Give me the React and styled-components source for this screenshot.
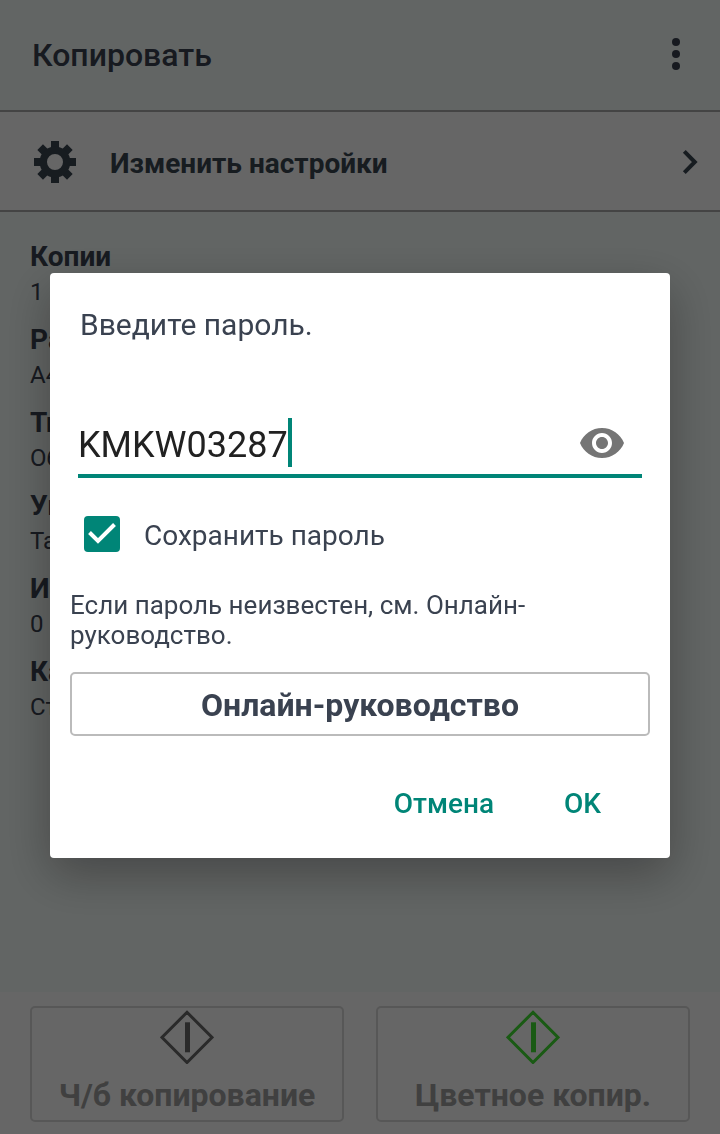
import React, { useState } from 'react';
import styled, { createGlobalStyle } from 'styled-components'
import { MdVisibility } from 'react-icons/md'

const GlobalStyle = createGlobalStyle`
* {
  box-sizing: border-box;
}

body {
  margin: 0;
  font-family: Roboto, "Noto Sans", sans-serif;
  color: #3a4250;
}

button, input {
  font-family: inherit;
  color: inherit;
}
`

const Screen = styled.div`
  min-height: 100vh;
  display: flex;
  flex-direction: column;
  background-color: #f5fcfa;
`

const Header = styled.header`
  display: flex;
  align-items: center;
  justify-content: space-between;
  height: 112px;
  padding: 0 32px;
  border-bottom: 2px solid #aaa;
`

const Title = styled.h1`
  margin: 0;
  font-size: 32px;
  font-weight: 500;
  line-height: 36px;
`

const IconButton = styled.button`
  display: flex;
  padding: 0;
  border: none;
  background: none;
`

const SettingsRow = styled.button`
  display: flex;
  align-items: center;
  gap: 32px;
  height: 100px;
  padding: 2px 20px 0 32px;
  border: none;
  border-bottom: 2px solid #aaa;
  background-color: #fff;
  color: #3a4652;
`

const SettingsLabel = styled.span`
  flex-grow: 1;
  padding-top: 4px;
  text-align: left;
  font-size: 28px;
  font-weight: 700;
  line-height: 36px;
`

const Options = styled.dl`
  flex-grow: 1;
  display: flex;
  flex-direction: column;
  gap: 13px;
  margin: 0;
  padding: 27px 30px;
`

const OptionName = styled.dt`
  font-size: 28px;
  font-weight: 700;
  line-height: 36px;
`

const OptionValue = styled.dd`
  margin: 0;
  font-size: 24px;
  line-height: 34px;
`

const Footer = styled.footer`
  display: flex;
  gap: 32px;
  padding: 14px 30px 12px;
  background-color: #fff;
`

const CopyButton = styled.button`
  flex: 1;
  display: flex;
  flex-direction: column;
  align-items: center;
  gap: 12px;
  height: 116px;
  padding: 2px 0 0;
  border: 2px solid #dadada;
  border-radius: 5px;
  background: none;
  color: #a0a0a0;
  font-size: 32px;
  font-weight: 700;
  line-height: 38px;
  white-space: nowrap;
`

const Backdrop = styled.div`
  position: fixed;
  inset: 0;
  display: flex;
  align-items: center;
  padding: 0 50px 3px;
  background-color: rgba(0, 0, 0, 0.6);
`

const Dialog = styled.form`
  flex-grow: 1;
  display: flex;
  flex-direction: column;
  padding: 32px 20px 31px;
  border-radius: 4px;
  background-color: #fff;
  box-shadow: 0 16px 48px rgba(0, 0, 0, 0.3);
`

const Message = styled.label`
  padding: 0 10px;
  font-size: 30px;
  line-height: 40px;
`

const Field = styled.div`
  display: flex;
  height: 60px;
  margin: 73px 8px 0;
  padding-right: 16px;
  border-bottom: 4px solid #008577;
`

const PasswordInput = styled.input`
  field-sizing: content;
  height: 52px;
  padding: 2px 0 0;
  border: none;
  outline: none;
  background: none;
  color: #212121;
  caret-color: transparent;
  font-size: 36px;
`

const Caret = styled.span`
  width: 4px;
  height: 49px;
  margin-right: auto;
  background-color: #008577;
`

const EyeButton = styled(IconButton)`
  align-items: center;
  height: 50px;
  color: #757575;
`

const SaveRow = styled.label`
  display: flex;
  align-items: flex-end;
  gap: 24px;
  margin: 38px 14px 0;
  font-size: 28px;
  line-height: 32px;
`

const CheckBox = styled.input`
  appearance: none;
  width: 36px;
  height: 36px;
  margin: 0;
  border: 4px solid #757575;
  border-radius: 4px;

  &:checked {
    border: none;
    background: #008577 url("data:image/svg+xml,%3Csvg xmlns='http://www.w3.org/2000/svg' viewBox='0 0 36 36'%3E%3Cpath d='M5.5 16.5L14 25L30.5 8.5' fill='none' stroke='white' stroke-width='4'/%3E%3C/svg%3E");
  }
`

const Note = styled.p`
  margin: 38px 0 0;
  font-size: 26px;
  line-height: 30px;
`

const GuideButton = styled.button`
  height: 64px;
  margin-top: 22px;
  padding: 2px 0 0;
  border: 2px solid #bbb;
  border-radius: 5px;
  background: none;
  font-size: 32px;
  font-weight: 700;
`

const Actions = styled.div`
  display: flex;
  justify-content: flex-end;
  gap: 38px;
  margin-top: 43px;
  padding-right: 33px;
`

const ActionButton = styled.button`
  height: 48px;
  padding: 0 16px;
  border: none;
  background: none;
  color: #008577;
  font-size: 28px;
  font-weight: 500;
`

const options = [
  { name: 'Копии', value: '1' },
  { name: 'Размер бумаги', value: 'A4' },
  { name: 'Тип бумаги', value: 'Обычная' },
  { name: 'Ув./Ум.', value: 'Такой же размер' },
  { name: 'Интенсивность', value: '0' },
  { name: 'Качество', value: 'Стандарт' },
]

const MoreIcon = () => (
  <svg width="24" height="48" viewBox="0 0 24 48" fill="currentColor">
    <circle cx="12" cy="11" r="4" />
    <circle cx="12" cy="23" r="4" />
    <circle cx="12" cy="35" r="4" />
  </svg>
)

const GearIcon = () => (
  <svg width="46" height="46" viewBox="-23 -23 46 46" fill="currentColor">
    {[0, 45, 90, 135].map(angle => (
      <path
        d="M-4 -21H4V-9H-4ZM-4 9H4V21H-4Z"
        key={angle}
        transform={`rotate(${angle})`}
      />
    ))}
    <circle r="11.7" fill="none" stroke="currentColor" strokeWidth="7.4" />
  </svg>
)

const ChevronIcon = () => (
  <svg width="20" height="28" viewBox="0 0 20 28" fill="none" stroke="currentColor" strokeWidth="4">
    <path d="M4.3 3.4L14.8 14L4.3 24.6" />
  </svg>
)

const StartIcon = ({ color }) => (
  <svg width="54" height="54" viewBox="0 0 54 54" fill="none" stroke={color}>
    <path d="M27 2.3L52.1 27.4L27 52.5L1.9 27.4Z" strokeWidth="3" />
    <path d="M27.5 12.3V42.3" strokeWidth="5" />
  </svg>
)

const App = () => {
  const [password, setPassword] = useState('KMKW03287')
  const [isSaved, setIsSaved] = useState(true)
  const [isVisible, setIsVisible] = useState(true)

  return (
    <>
      <GlobalStyle />
      <Screen>
        <Header>
          <Title>Копировать</Title>
          <IconButton type="button" aria-label="Меню">
            <MoreIcon />
          </IconButton>
        </Header>

        <SettingsRow type="button">
          <GearIcon />
          <SettingsLabel>Изменить настройки</SettingsLabel>
          <ChevronIcon />
        </SettingsRow>

        <Options>
          {options.map(option => (
            <div key={option.name}>
              <OptionName>{option.name}</OptionName>
              <OptionValue>{option.value}</OptionValue>
            </div>
          ))}
        </Options>

        <Footer>
          <CopyButton type="button" disabled>
            <StartIcon color="#696969" />
            Ч/б копирование
          </CopyButton>
          <CopyButton type="button" disabled>
            <StartIcon color="#41e132" />
            Цветное копир.
          </CopyButton>
        </Footer>
      </Screen>

      <Backdrop>
        <Dialog role="dialog" aria-modal="true" onSubmit={e => e.preventDefault()}>
          <Message htmlFor="password">Введите пароль.</Message>
          <Field>
            <PasswordInput
              id="password"
              onChange={e => setPassword(e.target.value)}
              type={isVisible ? 'text' : 'password'}
              value={password}
            />
            <Caret />
            <EyeButton
              aria-label="Показать пароль"
              onClick={() => setIsVisible(!isVisible)}
              type="button"
            >
              <MdVisibility size={48} />
            </EyeButton>
          </Field>

          <SaveRow>
            <CheckBox
              checked={isSaved}
              onChange={e => setIsSaved(e.target.checked)}
              type="checkbox"
            />
            Сохранить пароль
          </SaveRow>

          <Note>Если пароль неизвестен, см. Онлайн-руководство.</Note>
          <GuideButton type="button">Онлайн-руководство</GuideButton>

          <Actions>
            <ActionButton type="button">Отмена</ActionButton>
            <ActionButton type="submit">OK</ActionButton>
          </Actions>
        </Dialog>
      </Backdrop>
    </>
  )
};

export default App;
